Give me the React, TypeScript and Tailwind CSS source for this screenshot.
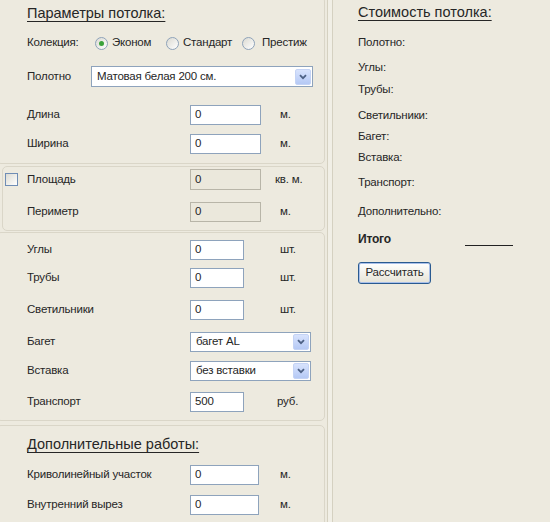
import React from "react";

const Input = ({ value, w, disabled }: { value: string; w: string; disabled?: boolean }) => (
  <div
    className={`${w} h-full border ${
      disabled ? "border-[#b8b5a8] bg-[#ebe8dc]" : "border-[#8ea3bc] bg-white"
    } flex items-center pl-[4px]`}
  >
    {value}
  </div>
);

const Chevron = () => (
  <div className="w-[16px] h-[16px] mr-[1px] rounded-[2px] border border-[#c4d3f5] bg-gradient-to-b from-[#d8e3fd] to-[#b5c9f5] flex items-center justify-center">
    <svg width="8" height="6" viewBox="0 0 8 6">
      <path d="M1 1.2 L4 4.2 L7 1.2" fill="none" stroke="#4d6185" strokeWidth="1.8" />
    </svg>
  </div>
);

const Select = ({ value, w }: { value: string; w: string }) => (
  <div className={`${w} h-full border border-[#8ea3bc] bg-white flex items-center justify-between`}>
    <span className="pl-[5px]">{value}</span>
    <Chevron />
  </div>
);

const Row = ({
  label,
  children,
  unit,
  cls,
  h = "h-[20px]",
  unitCls = "",
}: {
  label: string;
  children: React.ReactNode;
  unit?: string;
  cls: string;
  h?: string;
  unitCls?: string;
}) => (
  <div className={`flex ${h} ${cls}`}>
    <div className="w-[163px] flex items-center">{label}</div>
    <div className="w-[90px] h-full">{children}</div>
    {unit && <div className={`flex items-center ${unitCls}`}>{unit}</div>}
  </div>
);

const Radio = ({ checked }: { checked?: boolean }) => (
  <div className="w-[13px] h-[13px] rounded-full border border-[#8ea2b9] bg-gradient-to-br from-[#dbdad2] to-white flex items-center justify-center">
    {checked && <div className="w-[5px] h-[5px] rounded-full bg-[#3aa23a]" />}
  </div>
);

export default function App() {
  return (
    <div className="w-[550px] h-[522px] overflow-hidden bg-[#edeadf] flex text-[11.5px] tracking-[-0.2px] text-[#262626] font-['Liberation_Sans',Arial,sans-serif]">
      {/* left column */}
      <div className="w-[326px] shrink-0 flex flex-col">
        {/* box 1 */}
        <div className="-mt-[4px] -ml-[4px] w-[329px] h-[168px] shrink-0 border border-[#dad6c8] rounded-[5px] pl-[30px]">
          <div className="mt-[7px] h-[20px] flex items-center text-[14.5px] tracking-normal underline underline-offset-[3px]">
            Параметры потолка:
          </div>
          <div className="mt-[9px] h-[20px] flex items-center">
            <div className="w-[68px]">Колекция:</div>
            <div className="w-[71px] flex items-center">
              <Radio checked />
              <span className="ml-[4px]">Эконом</span>
            </div>
            <div className="w-[76px] flex items-center">
              <Radio />
              <span className="ml-[4px]">Стандарт</span>
            </div>
            <div className="flex items-center">
              <Radio />
              <span className="ml-[7px]">Престиж</span>
            </div>
          </div>
          <div className="mt-[13px] h-[21px] flex">
            <div className="w-[64px] flex items-center">Полотно</div>
            <Select value="Матовая белая 200 см." w="w-[222px]" />
          </div>
          <Row label="Длина" cls="mt-[18px]" unit="м.">
            <Input value="0" w="w-[71px]" />
          </Row>
          <Row label="Ширина" cls="mt-[9px]" unit="м.">
            <Input value="0" w="w-[71px]" />
          </Row>
        </div>

        {/* box 2 */}
        <div className="mt-[2px] ml-[2px] w-[323px] h-[65px] shrink-0 border border-[#dad6c8] rounded-[5px]">
          <div className="mt-[2px] h-[21px] flex">
            <div className="ml-[2px] w-[13px] flex items-center">
              <div className="w-[13px] h-[13px] border border-[#6f8db5] bg-gradient-to-br from-[#dcdbd3] to-white" />
            </div>
            <div className="ml-[9px] w-[163px] flex items-center">Площадь</div>
            <div className="w-[85px] h-full">
              <Input value="0" w="w-[71px]" disabled />
            </div>
            <div className="flex items-center">кв. м.</div>
          </div>
          <div className="mt-[12px] h-[20px] flex pl-[24px]">
            <div className="w-[163px] flex items-center">Периметр</div>
            <div className="w-[90px] h-full">
              <Input value="0" w="w-[71px]" disabled />
            </div>
            <div className="flex items-center">м.</div>
          </div>
        </div>

        {/* box 3 */}
        <div className="mt-[1px] -ml-[4px] w-[329px] h-[189px] shrink-0 border border-[#dad6c8] rounded-[5px] pl-[30px]">
          <Row label="Углы" cls="mt-[7px]" unit="шт.">
            <Input value="0" w="w-[54px]" />
          </Row>
          <Row label="Трубы" cls="mt-[8px]" unit="шт.">
            <Input value="0" w="w-[54px]" />
          </Row>
          <Row label="Светильники" cls="mt-[12px]" unit="шт.">
            <Input value="0" w="w-[54px]" />
          </Row>
          <div className="mt-[12px] h-[20px] flex">
            <div className="w-[163px] flex items-center">Багет</div>
            <Select value="багет AL" w="w-[121px]" />
          </div>
          <div className="mt-[9px] h-[20px] flex">
            <div className="w-[163px] flex items-center">Вставка</div>
            <Select value="без вставки" w="w-[121px]" />
          </div>
          <Row label="Транспорт" cls="mt-[11px]" unit="руб." unitCls="-ml-[3px]">
            <Input value="500" w="w-[54px]" />
          </Row>
        </div>

        {/* box 4 */}
        <div className="mt-[4px] -ml-[4px] w-[329px] h-[110px] shrink-0 border border-[#dad6c8] rounded-[5px] pl-[30px]">
          <div className="mt-[9px] h-[20px] flex items-center text-[14.5px] tracking-normal underline underline-offset-[3px]">
            Дополнительные работы:
          </div>
          <Row label="Криволинейный участок" cls="mt-[10px]" unit="м.">
            <Input value="0" w="w-[69px]" />
          </Row>
          <Row label="Внутренний вырез" cls="mt-[10px]" unit="м.">
            <Input value="0" w="w-[69px]" />
          </Row>
        </div>
      </div>

      {/* separator */}
      <div className="ml-[1px] w-[6px] h-full shrink-0 border-x border-[#d5d1c1] bg-[#f1efe6]" />

      {/* right column */}
      <div className="flex-1 pl-[25px] pt-[3px] flex flex-col">
        <div className="h-[20px] flex items-center text-[14.5px] tracking-normal underline underline-offset-[3px]">
          Стоимость потолка:
        </div>
        <div className="mt-[12px] h-[16px] flex items-center">Полотно:</div>
        <div className="mt-[9px] h-[16px] flex items-center">Углы:</div>
        <div className="mt-[6px] h-[16px] flex items-center">Трубы:</div>
        <div className="mt-[10px] h-[16px] flex items-center">Светильники:</div>
        <div className="mt-[5px] h-[16px] flex items-center">Багет:</div>
        <div className="mt-[5px] h-[16px] flex items-center">Вставка:</div>
        <div className="mt-[9px] h-[16px] flex items-center">Транспорт:</div>
        <div className="mt-[13px] h-[16px] flex items-center">Дополнительно:</div>
        <div className="mt-[11px] h-[16px] flex items-start">
          <div className="w-[107px] h-full flex items-center font-bold text-[12px]">Итого</div>
          <div className="mt-[14px] w-[48px] h-[1px] bg-[#222]" />
        </div>
        <div className="mt-[15px]">
          <button className="w-[73px] h-[22px] rounded-[3px] border border-[#2a5a90] bg-gradient-to-b from-white to-[#e6e3d6] shadow-[inset_0_0_0_1px_#a9c0ea] text-[#262626] flex items-center justify-center">
            Рассчитать
          </button>
        </div>
      </div>
    </div>
  );
}
